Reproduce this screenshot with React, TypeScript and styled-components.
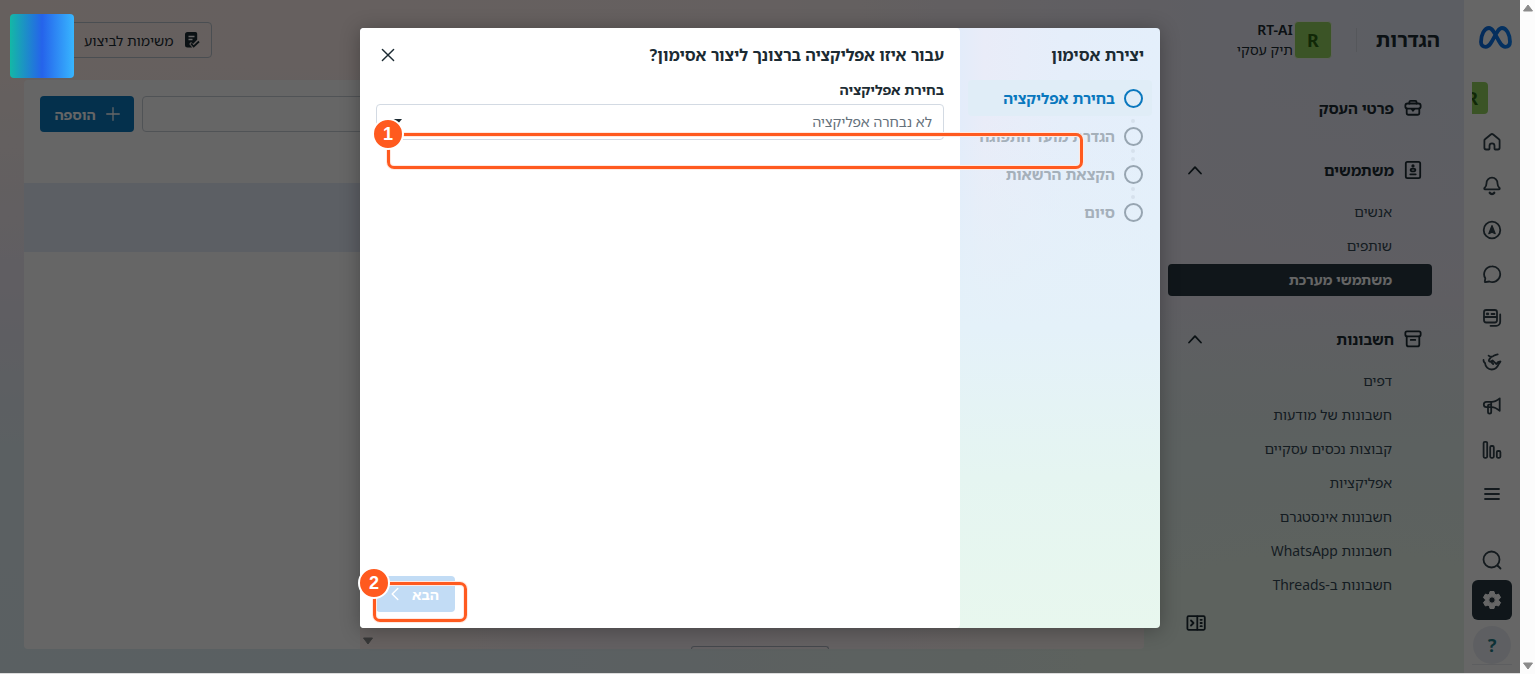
import React from "react";
import styled, { createGlobalStyle, css } from "styled-components";

const Global = createGlobalStyle`
  * { box-sizing: border-box; }
  html, body { margin: 0; padding: 0; }
  body, button, input, select {
    font-family: "Noto Sans Hebrew", "Open Sans", "Noto Sans", sans-serif;
  }
  body { font-size: 14px; line-height: 20px; color: #1c2b33; background: #fff; }
  button { cursor: pointer; }
`;

const Shell = styled.div`
  display: flex;
  direction: rtl;
  min-height: 100vh;
  background: #fcfcfc;
`;

const ScrollTrack = styled.div`
  flex: none;
  width: 15px;
  display: flex;
  flex-direction: column;
  align-items: center;
  justify-content: space-between;
  padding: 4px 0;
  background: #fcfcfc;
`;

const AppArea = styled.div`
  position: relative;
  flex: 1;
  min-width: 0;
  display: flex;
  border-bottom: 1px solid #dcdcdc;
  background:
    radial-gradient(ellipse 55% 60% at 88% 100%, #e8f4ec 0%, #e8f4ec 30%, rgba(232, 244, 236, 0) 100%),
    linear-gradient(to bottom, rgba(236, 236, 248, 0) 10%, #eeebf6 45%, #e4eff5 66%, #e2eff5 100%),
    linear-gradient(to right, #fff1ec 0%, #fdf0ef 50%, #ebebf7 80%, #e4ecf8 100%);
`;

const Rail = styled.nav`
  flex: none;
  width: 56px;
  display: flex;
  flex-direction: column;
  align-items: center;
  padding: 20px 8px 8px;
  background: #fff;
`;

const MetaLogo = styled.svg`
  flex: none;
  align-self: flex-start;
`;

const RailAvatar = styled.div`
  align-self: flex-end;
  width: 16px;
  height: 32px;
  margin: 28px 0 6px;
  padding-right: 10px;
  overflow: hidden;
  border-radius: 0 4px 4px 0;
  background: #94d360;
  color: #2b6412;
  font-size: 18px;
  font-weight: 700;
  line-height: 32px;
  display: flex;
  justify-content: flex-start;
`;

const RailButton = styled.button<{ $active?: boolean; $compact?: boolean }>`
  flex: none;
  width: 40px;
  height: ${(p) => (p.$compact ? 40 : 44)}px;
  padding: 0;
  border: 0;
  border-radius: 6px;
  display: grid;
  place-items: center;
  color: ${(p) => (p.$active ? "#fff" : "#32434c")};
  background: ${(p) => (p.$active ? "#283943" : "transparent")};
`;

const RailFoot = styled.div`
  margin-top: auto;
  display: flex;
  flex-direction: column;
  align-items: center;
  width: 40px;
  border-bottom: 1px solid #e9ecef;
`;

const HelpButton = styled.button`
  width: 38px;
  height: 38px;
  margin-top: 6px;
  border: 0;
  border-radius: 50%;
  background: #ebeef4;
  color: #1f7a86;
  font-size: 18px;
  font-weight: 700;
`;

const SidePanel = styled.aside`
  flex: none;
  width: 320px;
  display: flex;
  flex-direction: column;
  padding: 0 32px 40px 24px;
`;

const PanelHead = styled.header`
  display: flex;
  align-items: center;
  height: 80px;
  margin: 0 -8px 9px 0;
`;

const PanelTitle = styled.h1`
  margin: 0;
  font-size: 20px;
  line-height: 28px;
  font-weight: 700;
`;

const Divider = styled.span`
  width: 1px;
  height: 24px;
  margin: 0 19px 0 24px;
  background: #d5dae3;
`;

const Avatar = styled.span`
  width: 38px;
  height: 38px;
  border: 1px solid #e9f1e3;
  border-radius: 4px;
  display: grid;
  place-items: center;
  background: #94d360;
  color: #2b6412;
  font-size: 18px;
  font-weight: 700;
`;

const Account = styled.div`
  text-align: right;
  margin-right: 1px;
  strong { display: block; font-weight: 600; }
`;

const NavGroup = styled.section`
  & + & { margin-top: 24px; }
`;

const GroupHead = styled.button`
  width: 100%;
  height: 38px;
  padding: 0 10px 0 20px;
  border: 0;
  background: transparent;
  display: flex;
  align-items: center;
  gap: 10px;
  font-size: 15px;
  font-weight: 700;
  color: #1c2b33;
  svg:last-child:not(:first-child) { margin-right: auto; }
`;

const GroupList = styled.div`
  display: flex;
  flex-direction: column;
  gap: 2px;
  padding-top: 7px;
`;

const NavLink = styled.a<{ $active?: boolean }>`
  height: 32px;
  padding: 0 40px;
  border-radius: 4px;
  line-height: 32px;
  text-decoration: none;
  color: #344854;
  ${(p) =>
    p.$active &&
    css`
      background: #283943;
      color: #fff;
      font-weight: 700;
    `}
`;

const CollapseButton = styled.button`
  align-self: flex-end;
  margin: auto 0 0 18px;
  padding: 0;
  border: 0;
  background: transparent;
  color: #1c2b33;
  height: 20px;
`;

const Main = styled.main`
  flex: 1;
  min-width: 0;
  display: flex;
  flex-direction: column;
  padding: 0 0 24px 24px;
`;

const TopBar = styled.div`
  height: 80px;
  display: flex;
  align-items: center;
  justify-content: flex-end;
`;

const TasksButton = styled.button`
  height: 36px;
  padding: 0 11px 0 59px;
  display: flex;
  align-items: center;
  gap: 10px;
  border: 1px solid #b9c2cc;
  border-radius: 4px;
  background: transparent;
  font-size: 14px;
  color: #1c2b33;
`;

const Card = styled.div`
  flex: 1;
  display: flex;
  flex-direction: column;
  border-radius: 4px;
  overflow: hidden;
`;

const Toolbar = styled.div`
  height: 103px;
  display: flex;
  align-items: flex-start;
  gap: 8px;
  padding: 16px;
  background: #fff;
`;

const SearchInput = styled.input`
  flex: 1;
  height: 36px;
  border: 1px solid #c9d0d8;
  border-radius: 4px;
  background: #fff;
`;

const AddButton = styled.button`
  height: 36px;
  width: 94px;
  display: flex;
  align-items: center;
  justify-content: center;
  gap: 10px;
  border: 0;
  border-radius: 4px;
  background: #0a78be;
  color: #fff;
  font-size: 14px;
  font-weight: 700;
`;

const CardBody = styled.div`
  flex: 1;
  display: flex;
`;

const Details = styled.div`
  flex: 1;
  display: flex;
  align-items: flex-end;
  justify-content: center;
  background: linear-gradient(to right, #fff3ef 0%, #f7f0f6 35%, #fdf4f3 80%);
`;

const DetailsButton = styled.button`
  width: 138px;
  height: 3px;
  padding: 0;
  border: 1px solid #aab2bf;
  border-bottom: 0;
  border-radius: 3px 3px 0 0;
  background: transparent;
`;

const DetailsScroll = styled.div`
  width: 15px;
  display: flex;
  align-items: flex-end;
  justify-content: center;
  padding-bottom: 4px;
  background: #fff3ef;
`;

const UserList = styled.div`
  flex: none;
  width: 336px;
  background: #fff;
`;

const SelectedUser = styled.div`
  height: 69px;
  background: #e6eefa;
`;

const Backdrop = styled.div`
  position: absolute;
  inset: 0;
  display: flex;
  justify-content: center;
  align-items: flex-start;
  padding-top: 28px;
  background: rgba(0, 0, 0, 0.6);
`;

const Dialog = styled.section`
  position: relative;
  display: flex;
  width: 800px;
  height: 600px;
  border-radius: 4px;
  background:
    linear-gradient(to bottom, rgba(228, 241, 249, 0) 15%, #e4f1f9 50%, #e5f5f1 75%, #e8f7ee 100%),
    linear-gradient(to left, #e4effb 0%, #e5eefa 12%, #e9ecf8 22%, #e3ecfa 25%);
  box-shadow: 0 2px 20px rgba(0, 0, 0, 0.3);
`;

const Steps = styled.div`
  flex: none;
  width: 200px;
  padding: 16px 8px;
`;

const StepsTitle = styled.h2`
  margin: 0 8px 14px;
  font-size: 16px;
  line-height: 22px;
  font-weight: 700;
`;

const StepList = styled.ol`
  list-style: none;
  margin: 0;
  padding: 0;
  display: flex;
  flex-direction: column;
  gap: 2px;
`;

const Step = styled.li<{ $current?: boolean }>`
  height: 36px;
  padding-right: 9px;
  display: flex;
  align-items: center;
  gap: 9px;
  border-radius: 4px;
  font-size: 15px;
  font-weight: 700;
  white-space: nowrap;
  color: #a5b0ba;
  ${(p) =>
    p.$current &&
    css`
      position: relative;
      z-index: 1;
      color: #0a78be;
      background: #e0edf7;
    `}
`;

const StepMark = styled.span<{ $current?: boolean; $dots?: boolean }>`
  position: relative;
  flex: none;
  width: 19px;
  height: 19px;
  border: 2px solid ${(p) => (p.$current ? "#0a78be" : "#97a5b1")};
  border-radius: 50%;
  ${(p) =>
    p.$dots &&
    css`
      &::before,
      &::after {
        content: "";
        position: absolute;
        left: 5px;
        width: 4px;
        height: 4px;
        border-radius: 50%;
        background: #d6e1ec;
      }
      &::before { top: -10px; }
      &::after { top: -18px; }
    `}
`;

const Pane = styled.div`
  flex: 1;
  min-width: 0;
  display: flex;
  flex-direction: column;
  padding: 16px;
  border-radius: 4px;
  background: #fff;
`;

const PaneHead = styled.div`
  display: flex;
  align-items: center;
  justify-content: space-between;
  height: 22px;
  margin-bottom: 14px;
`;

const PaneTitle = styled.h2`
  margin: 0;
  font-size: 16px;
  line-height: 22px;
  font-weight: 700;
`;

const CloseButton = styled.button`
  width: 24px;
  height: 24px;
  padding: 0;
  border: 0;
  display: grid;
  place-items: center;
  background: transparent;
  color: #1c2b33;
`;

const FieldLabel = styled.label`
  font-weight: 700;
  line-height: 20px;
  margin-bottom: 4px;
`;

const Picker = styled.select`
  appearance: none;
  width: 100%;
  height: 36px;
  padding: 0 11px 1px;
  border: 1px solid #d3dae3;
  border-radius: 4px;
  background: transparent;
  font-size: 14px;
  color: #65717b;
`;

const PickerWrap = styled.div`
  position: relative;
  svg { position: absolute; left: 16px; top: 15px; }
`;

const NextButton = styled.button`
  align-self: flex-end;
  margin-top: auto;
  width: 79px;
  height: 36px;
  padding: 0 16px 0 8px;
  display: flex;
  align-items: center;
  justify-content: flex-start;
  gap: 9px;
  border: 0;
  border-radius: 4px;
  background: #c2dcf5;
  color: #fff;
  font-size: 14px;
  font-weight: 700;
`;

const Callout = styled.div<{ $x: number; $y: number; $w: number; $h: number }>`
  position: absolute;
  z-index: 2;
  left: ${(p) => p.$x}px;
  top: ${(p) => p.$y}px;
  width: ${(p) => p.$w}px;
  height: ${(p) => p.$h}px;
  border: 3px solid #ff5a1f;
  border-radius: 7px;
  box-shadow: 0 0 0 1px #ffe9e1, inset 0 0 0 1px #ffe9e1;
  pointer-events: none;
`;

const CalloutBadge = styled.span`
  position: absolute;
  left: -18px;
  top: -18px;
  width: 32px;
  height: 32px;
  border: 2px solid #fff;
  border-radius: 50%;
  background: #ff5a1f;
  color: #fff;
  font: 700 18px/28px "Liberation Sans", sans-serif;
  text-align: center;
`;

const Brand = styled.div`
  position: absolute;
  left: 10px;
  top: 14px;
  width: 64px;
  height: 64px;
  border-radius: 4px;
  background: linear-gradient(to right, #14b8a6, #2563eb 50%, #38b6ff);
`;

const Ico = ({ size = 20, sw = 1.8, children }: { size?: number; sw?: number; children: React.ReactNode }) => (
  <svg width={size} height={size} viewBox="0 0 20 20" fill="none" stroke="currentColor" strokeWidth={sw} strokeLinecap="round" strokeLinejoin="round" aria-hidden="true">
    {children}
  </svg>
);

const railIcons: { name: string; art: React.ReactNode }[] = [
  { name: "בית", art: <path d="M2.400 8.600v7.200c0 1 .7 1.700 1.700 1.700h2.600c.5 0 .8-.3.8-.8v-2.900a2.500 2.500 0 0 1 5 0v2.900c0 .5.3.8.8.8h2.600c1 0 1.700-.7 1.700-1.700V8.600c0-.5-.2-1-.6-1.300l-5.800-4.800a1.900 1.900 0 0 0-2.400 0L3 7.300c-.4.3-.6.8-.6 1.300z" /> },
  { name: "התראות", art: <><path d="M3 13.400c-.7 0-1-.9-.5-1.400 1.400-1.400 2-2.200 2-4.600A5.500 5.500 0 0 1 10 1.600a5.500 5.500 0 0 1 5.500 5.800c0 2.400.6 3.200 2 4.600.5.5.2 1.400-.5 1.400z" /><path d="M7.800 16.800a2.600 2.600 0 0 0 4.400 0" strokeWidth="2.400" /></> },
  { name: "תכנון", art: <><circle cx="10" cy="10" r="8.300" /><path d="M10 5.500l3.200 8.200L10 12.300l-3.200 1.400z" fill="currentColor" strokeWidth="1.200" /></> },
  { name: "הודעות", art: <path d="M10 2.300a7.900 7.900 0 1 1-2.700 15.200l-3.900.6c-.5 0-.7-.3-.6-.7l.5-3.100A7.900 7.900 0 0 1 10 2.300z" /> },
  { name: "תוכן", art: <><rect x="2" y="2" width="13" height="12.500" rx="2.200" /><path d="M2.500 9h12M9.500 6h3" /><rect x="4.800" y="5.100" width="1.800" height="1.600" fill="currentColor" strokeWidth="1" /><path d="M18.200 6.500v7.300a4 4 0 0 1-4 4H8.500" /></> },
  { name: "שותפויות", art: <><path d="M1.500 8c-.2 1.500.8 2.500 1.600 3.200.2 3.600 3 6.300 6.600 6.300 3.200 0 5.500-1.800 6.700-4.800.4-1.100 1.500-1.600 2.100-3.200-1.600.2-3 .6-4 2.200" /><path d="M6.600 3.600c1.400 1.200 3 1.300 4.400.6 1.400-.8 2.800-1.800 4.700-1.900M9.200 4.900c-.8 1.200-1.900 2-2.300 3.300-.3 1.200 1 1.800 2 1.200l1.600-1 3.700 3.400M8.700 9.500l2.500 2.500" /></> },
  { name: "מודעות", art: <><path d="M4.500 5.800h5.300c2.800 0 5-1.300 7.900-3.400v12.400c-2.900-2.300-5.100-3.600-7.900-3.600H4.500a2.700 2.700 0 0 1 0-5.400z" /><path d="M6 11.200v4.900a1.600 1.600 0 0 0 3.200 0V6M6 11V9.700c0-.6.500-1 1-1h2" /></> },
  { name: "תובנות", art: <><rect x="1.600" y="1.800" width="3.600" height="16" rx="1.200" /><rect x="8.200" y="6" width="3.600" height="11.800" rx="1.200" /><rect x="14.800" y="11" width="3.600" height="6.800" rx="1.200" /></> },
  { name: "כל הכלים", art: <path d="M3 5h14M3 10h14M3 15h14" /> },
];

const Chevron = () => (
  <Ico size={14} sw={2.600}><path d="M1.500 15L10 6l8.500 9" /></Ico>
);

const Triangle = ({ down, color = "#8b8b8b" }: { down?: boolean; color?: string }) => (
  <svg width="10" height="8" viewBox="0 0 10 8" fill={color} stroke={color} strokeLinejoin="round" aria-hidden="true">
    <path d={down ? "M.5 1h9L5 7z" : "M.5 7h9L5 1z"} />
  </svg>
);

const accountLinks = [
  "דפים",
  "חשבונות של מודעות",
  "קבוצות נכסים עסקיים",
  "אפליקציות",
  "חשבונות אינסטגרם",
  "חשבונות WhatsApp",
  "חשבונות ב-Threads",
];

const steps = ["בחירת אפליקציה", "הגדרת מועד התפוגה", "הקצאת הרשאות", "סיום"];

export default function App() {
  return (
    <Shell>
      <Global />
      <ScrollTrack>
        <Triangle />
        <Triangle down />
      </ScrollTrack>
      <AppArea>
        <Rail>
          <MetaLogo width="34" height="34" viewBox="0 0 34 34" fill="none" aria-label="Meta">
            <defs>
              <linearGradient id="meta" x1="0" x2="1">
                <stop offset="0" stopColor="#0a6be0" />
                <stop offset="1" stopColor="#0a7ff5" />
              </linearGradient>
            </defs>
            <path d="M3 22C3 14.500 6.500 8 11 8c6.200 0 9.500 18.800 16.200 18.800 3 0 4.800-1.700 4.800-5C32 14.500 28.500 8 24 8c-6.200 0-9.500 18.800-16.200 18.800C4.800 26.800 3 25.200 3 22z" stroke="url(#meta)" strokeWidth="3.800" />
          </MetaLogo>
          <RailAvatar>R</RailAvatar>
          {railIcons.map((i) => (
            <RailButton key={i.name} aria-label={i.name}>
              <Ico>{i.art}</Ico>
            </RailButton>
          ))}
          <RailFoot>
            <RailButton $compact aria-label="חיפוש">
              <Ico><circle cx="9.500" cy="9.500" r="8" /><path d="M15.500 15.500l3 3" /></Ico>
            </RailButton>
            <RailButton $active $compact aria-label="הגדרות">
              <svg width="20" height="20" viewBox="0 0 20 20" aria-hidden="true">
                <path fill="currentColor" stroke="currentColor" strokeLinejoin="round" fillRule="evenodd" d="M8 1.500h4l.6 2.500 1.500.9 2.500-.8 2 3.500-1.900 1.800v1.300l1.900 1.800-2 3.500-2.500-.8-1.500.9-.6 2.400H8l-.6-2.400-1.500-.9-2.500.8-2-3.500 1.900-1.800V9.400L1.400 7.600l2-3.500 2.500.8L7.400 4zM10 6.800a3.200 3.200 0 1 0 0 6.400 3.200 3.200 0 0 0 0-6.400z" />
              </svg>
            </RailButton>
            <HelpButton aria-label="עזרה">?</HelpButton>
          </RailFoot>
        </Rail>

        <SidePanel>
          <PanelHead>
            <PanelTitle>הגדרות</PanelTitle>
            <Divider />
            <Avatar>R</Avatar>
            <Account>
              <strong>RT-AI</strong>
              תיק עסקי
            </Account>
          </PanelHead>
          <NavGroup>
            <GroupHead>
              <Ico size={18} sw={2}><rect x="1.500" y="5" width="17" height="5.800" rx="2.500" /><path d="M3 10.500v5c0 1.200.8 2 2 2h10c1.200 0 2-.8 2-2v-5M6 5V3.500C6 2.700 6.600 2 7.500 2h5c.9 0 1.500.7 1.500 1.500V5M8.500 11h3L10 13z" /></Ico>
              פרטי העסק
            </GroupHead>
          </NavGroup>
          <NavGroup>
            <GroupHead>
              <Ico size={18} sw={2}><rect x="2" y="1" width="16" height="18" rx="1.800" /><circle cx="10" cy="5.500" r=".8" fill="currentColor" /><ellipse cx="10" cy="10" rx="2.600" ry="1.600" /><path d="M7 14.800h6" /></Ico>
              משתמשים
              <Chevron />
            </GroupHead>
            <GroupList>
              <NavLink href="#people">אנשים</NavLink>
              <NavLink href="#partners">שותפים</NavLink>
              <NavLink href="#system-users" $active>משתמשי מערכת</NavLink>
            </GroupList>
          </NavGroup>
          <NavGroup>
            <GroupHead>
              <Ico size={18} sw={2}><rect x="1.500" y="1.500" width="17" height="5.500" rx="1.800" /><path d="M3 7v9c0 1.300.9 2.200 2.200 2.200h9.600c1.300 0 2.200-.9 2.200-2.200V7M7.500 11h5" /></Ico>
              חשבונות
              <Chevron />
            </GroupHead>
            <GroupList>
              {accountLinks.map((t) => (
                <NavLink key={t} href="#accounts">{t}</NavLink>
              ))}
            </GroupList>
          </NavGroup>
          <CollapseButton aria-label="כיווץ תפריט">
            <Ico><rect x="1.400" y="3.200" width="17.400" height="13.600" rx="1.200" /><path d="M11.300 3.500v13M5 7.500L7.500 10 5 12.500M14.500 6.800h1.300M14.500 10h1.300M14.500 13.200h1.300" /></Ico>
          </CollapseButton>
        </SidePanel>

        <Main>
          <TopBar>
            <TasksButton>
              <svg width="16" height="16" viewBox="0 0 16 16" fill="none" aria-hidden="true">
                <path d="M3.500 0h8A1.700 1.700 0 0 1 13.200 1.700v6L9 12l-2-2-1.800 2 3 3.500H3.500A2.500 2.500 0 0 1 1 13V2.500A2.500 2.500 0 0 1 3.500 0z" fill="#1c2b33" />
                <path d="M4.500 4.500h6M4.500 7.500h4" stroke="#fff" strokeWidth="1.400" />
                <path d="M7 11.500l2.700 3L15 9.500" stroke="#1c2b33" strokeWidth="1.800" />
              </svg>
              משימות לביצוע
            </TasksButton>
          </TopBar>
          <Card>
            <Toolbar>
              <SearchInput aria-label="חיפוש משתמשים" />
              <AddButton>
                <Ico size={14} sw={1.800}><path d="M10 1v18M1 10h18" /></Ico>
                הוספה
              </AddButton>
            </Toolbar>
            <CardBody>
              <Details>
                <DetailsButton aria-label="פרטים נוספים" />
              </Details>
              <DetailsScroll>
                <Triangle down />
              </DetailsScroll>
              <UserList>
                <SelectedUser />
              </UserList>
            </CardBody>
          </Card>
        </Main>

        <Backdrop>
          <Dialog role="dialog" aria-modal="true" aria-labelledby="pane-title">
            <Steps>
              <StepsTitle>יצירת אסימון</StepsTitle>
              <StepList>
                {steps.map((s, i) => (
                  <Step key={s} $current={i === 0}>
                    <StepMark $current={i === 0} $dots={i > 0} />
                    {s}
                  </Step>
                ))}
              </StepList>
            </Steps>
            <Pane>
              <PaneHead>
                <PaneTitle id="pane-title">עבור איזו אפליקציה ברצונך ליצור אסימון?</PaneTitle>
                <CloseButton aria-label="סגירה">
                  <Ico size={16} sw={1.800}><path d="M3 3l14 14M17 3L3 17" /></Ico>
                </CloseButton>
              </PaneHead>
              <FieldLabel htmlFor="app-picker">בחירת אפליקציה</FieldLabel>
              <PickerWrap>
                <Picker id="app-picker" defaultValue="">
                  <option value="">לא נבחרה אפליקציה</option>
                </Picker>
                <svg width="10" height="6" viewBox="0 0 10 6" aria-hidden="true"><path d="M0 0h10L5 6z" fill="#1c2b33" /></svg>
              </PickerWrap>
              <NextButton disabled>
                הבא
                <Ico size={16} sw={1.800}><path d="M13.500 3l-7 7 7 7" /></Ico>
              </NextButton>
            </Pane>
            <Callout $x={27} $y={105} $w={696} $h={36}>
              <CalloutBadge>1</CalloutBadge>
            </Callout>
            <Callout $x={13} $y={554} $w={94} $h={40}>
              <CalloutBadge>2</CalloutBadge>
            </Callout>
          </Dialog>
        </Backdrop>
        <Brand />
      </AppArea>
    </Shell>
  );
}
